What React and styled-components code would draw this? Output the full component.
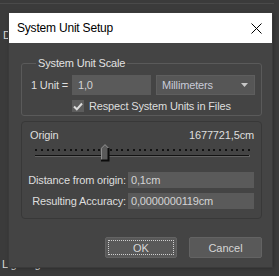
import React from "react";
import styled, { createGlobalStyle } from "styled-components";

const GlobalStyle = createGlobalStyle`
  html, body {
    margin: 0;
    padding: 0;
    background: #3b3b3b;
  }
  body {
    width: 279px;
    height: 276px;
    overflow: hidden;
    font-family: "Liberation Sans", Arial, sans-serif;
  }
`;

const Desktop = styled.div`
  position: relative;
  width: 279px;
  height: 276px;
  background: #3b3b3b;
  overflow: hidden;
`;

const BackApp = styled.div`
  height: 100%;
  display: flex;
  flex-direction: column;
  color: #d8d8d8;
  font-size: 11px;
`;

const BackTop = styled.div`
  height: 3px;
  border-bottom: 1px solid #4a4a4a;
  margin-right: 5px;
`;

const BackLetter = styled.div`
  margin: 25px 0 0 3px;
`;

const BackFooter = styled.div`
  margin-top: auto;
  padding: 0 0 6px 2px;
`;

const Window = styled.div`
  position: absolute;
  left: 9px;
  top: 13px;
  width: 263px;
  height: 254px;
  background: #444444;
  box-shadow: 0 0 0 1px #3a3a3a, 1px 1px 4px rgba(0, 0, 0, 0.35);
  display: flex;
  flex-direction: column;
  color: #dedede;
  font-size: 11px;
  letter-spacing: -0.15px;
`;

const TitleBar = styled.div`
  height: 30px;
  background: #ffffff;
  display: flex;
  align-items: center;
  justify-content: space-between;
  padding: 0 10px 0 8px;
  color: #000;
  font-size: 12px;
  letter-spacing: -0.2px;
`;

const Body = styled.div`
  flex: 1;
  display: flex;
  flex-direction: column;
  padding: 14px 10px 9px 12px;
`;

const Group = styled.fieldset`
  margin: 0;
  width: 241px;
  box-sizing: border-box;
  border: 1px solid #5a5a5a;
  border-radius: 3px;
  padding: 6px 0 3px 9px;
  display: flex;
  flex-direction: column;
  gap: 5px;
`;

const Legend = styled.legend`
  margin-left: 5px;
  padding: 0 2px;
  line-height: 12px;
  color: #e2e2e2;
`;

const Row = styled.div`
  display: flex;
  align-items: center;
  gap: ${(p) => p.$gap || 0}px;
  padding-left: ${(p) => p.$indent || 0}px;
`;

const Label = styled.span`
  width: ${(p) => (p.$w ? `${p.$w}px` : "auto")};
  display: flex;
  justify-content: ${(p) => (p.$align === "right" ? "flex-end" : "flex-start")};
  white-space: nowrap;
  flex-shrink: 0;
`;

const Field = styled.div`
  width: ${(p) => p.$w}px;
  height: ${(p) => p.$h || 20}px;
  box-sizing: border-box;
  background: #5a5a5a;
  color: #d4d4d4;
  display: flex;
  align-items: center;
  padding-left: ${(p) => p.$pad || 6}px;
`;

const Select = styled.div`
  width: 99px;
  height: 20px;
  margin-left: 5px;
  box-sizing: border-box;
  background: #565656;
  border: 1px solid #5e5e5e;
  color: #c9cbd8;
  display: flex;
  align-items: center;
  justify-content: space-between;
  padding: 0 6px 0 5px;
`;

const Check = styled.div`
  width: 12px;
  height: 12px;
  background: #5c5c5c;
  display: flex;
  align-items: center;
  justify-content: center;
`;

const Panel = styled.div`
  margin-top: 5px;
  width: 241px;
  height: 98px;
  box-sizing: border-box;
  border: 1px solid #383838;
  border-radius: 4px;
  padding: 6px 7px 0 7px;
  display: flex;
  flex-direction: column;
`;

const PanelHead = styled.div`
  display: flex;
  justify-content: space-between;
  align-items: center;
  height: 13px;
  padding-left: 1px;
`;

const SliderWrap = styled.div`
  margin: 3px 0 0 6px;
  height: 18px;
`;

const Fields = styled.div`
  margin-top: 10px;
  display: flex;
  flex-direction: column;
  gap: 5px;
  margin-left: -3px;
`;

const Footer = styled.div`
  margin-top: auto;
  display: flex;
  justify-content: flex-end;
  gap: 12px;
`;

const Button = styled.button`
  position: relative;
  width: ${(p) => p.$w}px;
  height: 21px;
  background: #595959;
  border: 1px solid #636363;
  border-radius: 2px;
  color: #d6d6d6;
  font-family: inherit;
  font-size: 11px;
  padding: 0;
  ${(p) =>
    p.$focus &&
    `
    &::after {
      content: "";
      position: absolute;
      inset: 2px;
      border: 1px dotted #cfcfcf;
    }
  `}
`;

const CloseIcon = () => (
  <svg width="11" height="11" viewBox="0 0 11 11">
    <path d="M0.5 0.5 L10.5 10.5 M10.5 0.5 L0.5 10.5" stroke="#000" strokeWidth="1" />
  </svg>
);

const Caret = () => (
  <svg width="7" height="4" viewBox="0 0 7 4">
    <path d="M0 0 H7 L3.5 4 Z" fill="#c8c8c8" />
  </svg>
);

const Tick = () => (
  <svg width="10" height="9" viewBox="0 0 10 9">
    <path d="M1 4.5 L3.8 7.3 L9 1.5" stroke="#dcdcdc" strokeWidth="2" fill="none" />
  </svg>
);

const Slider = ({ count = 38, width = 215, thumb = 66 }) => {
  const step = (width - 2) / (count - 1);
  return (
    <svg width={width + 2} height="18" viewBox={`0 0 ${width + 2} 18`}>
      {Array.from({ length: count }).map((_, i) => (
        <rect key={i} x={Math.round(i * step)} y="5" width="2" height="2" fill="#121212" />
      ))}
      <rect x="0" y="11" width={width} height="1" fill="#121212" />
      <rect x="0" y="12" width={width} height="1" fill="#626262" />
      <rect x={width - 1} y="11" width="1" height="2" fill="#626262" />
      <path d={`M${thumb} 17 V4 L${thumb + 4} 0 L${thumb + 8} 4 V17 Z`} fill="#5a5a5a" />
      <path d={`M${thumb + 0.5} 16 V4.2 L${thumb + 4} 0.7 L${thumb + 7.5} 4.2`} stroke="#8c8c8c" fill="none" />
      <path d={`M${thumb} 16.5 H${thumb + 7.5} V4`} stroke="#0c0c0c" strokeWidth="2" fill="none" />
    </svg>
  );
};

export default function App() {
  return (
    <>
      <GlobalStyle />
      <Desktop>
        <BackApp>
          <BackTop />
          <BackLetter>D</BackLetter>
          <BackFooter>Lighting Units</BackFooter>
        </BackApp>
        <Window>
          <TitleBar>
            <span>System Unit Setup</span>
            <CloseIcon />
          </TitleBar>
          <Body>
            <Group>
              <Legend>System Unit Scale</Legend>
              <Row>
                <Label $w={41}>1 Unit =</Label>
                <Field $w={79}>1,0</Field>
                <Select>
                  <span>Millimeters</span>
                  <Caret />
                </Select>
              </Row>
              <Row $indent={41} $gap={5}>
                <Check>
                  <Tick />
                </Check>
                <span>Respect System Units in Files</span>
              </Row>
            </Group>
            <Panel>
              <PanelHead>
                <span>Origin</span>
                <span>1677721,5cm</span>
              </PanelHead>
              <SliderWrap>
                <Slider />
              </SliderWrap>
              <Fields>
                <Row $gap={2}>
                  <Label $w={100} $align="right">Distance from origin:</Label>
                  <Field $w={127} $h={16} $pad={3}>0,1cm</Field>
                </Row>
                <Row $gap={2}>
                  <Label $w={100} $align="right">Resulting Accuracy:</Label>
                  <Field $w={127} $h={16} $pad={3}>0,0000000119cm</Field>
                </Row>
              </Fields>
            </Panel>
            <Footer>
              <Button $w={72} $focus>OK</Button>
              <Button $w={73}>Cancel</Button>
            </Footer>
          </Body>
        </Window>
      </Desktop>
    </>
  );
}
